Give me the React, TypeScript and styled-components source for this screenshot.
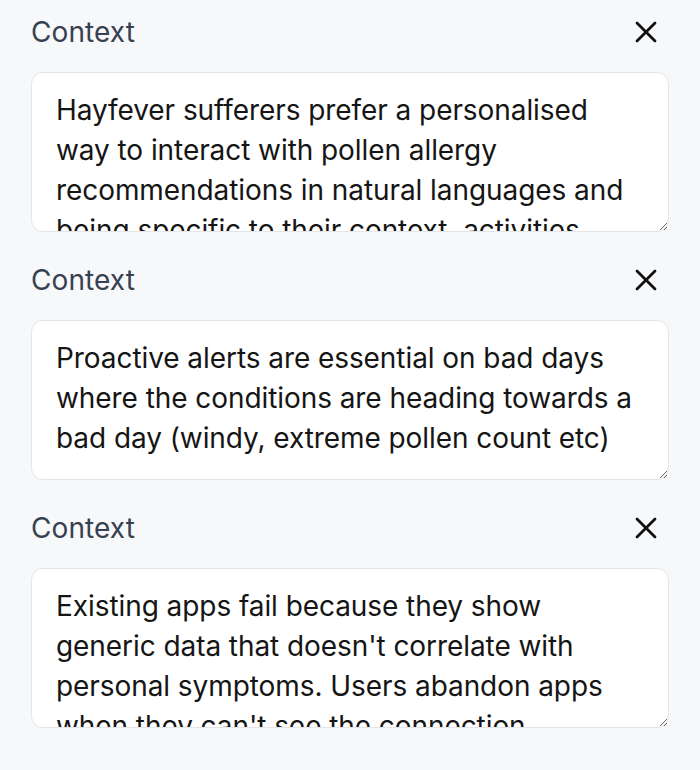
import React from "react";
import styled, { createGlobalStyle } from "styled-components";

const Global = createGlobalStyle`
  html, body {
    margin: 0;
    padding: 0;
    background: #f7f8fa;
    font-family: Inter, "Noto Sans", sans-serif;
  }
`;

const Page = styled.div`
  display: flex;
  flex-direction: column;
  gap: 28px;
  padding: 12px 31px 0 31px;
`;

const Section = styled.section`
  display: flex;
  flex-direction: column;
  gap: 20px;
`;

const Header = styled.div`
  display: flex;
  align-items: center;
  justify-content: space-between;
  height: 40px;
`;

const Label = styled.label`
  font-size: 28px;
  line-height: 40px;
  font-weight: 400;
  color: #374151;
  letter-spacing: 0.1px;
`;

const CloseButton = styled.button`
  display: flex;
  align-items: center;
  justify-content: center;
  width: 40px;
  height: 40px;
  margin-right: 3px;
  padding: 0;
  border: none;
  background: transparent;
  color: #111111;
  cursor: pointer;
`;

const TextArea = styled.textarea`
  box-sizing: border-box;
  width: 100%;
  height: 160px;
  margin: 0;
  padding: 17px 24px;
  border: 1.5px solid #e5e5e5;
  border-radius: 12px;
  background: #ffffff;
  color: #151515;
  font-family: Inter, "Noto Sans", sans-serif;
  font-size: 28px;
  line-height: 40px;
  letter-spacing: -0.07px;
  resize: vertical;
  overflow: hidden;
  outline: none;
`;

const XIcon = () => (
  <svg width="24" height="24" viewBox="0 0 24 24" fill="none">
    <path d="M3 3L21 21M21 3L3 21" stroke="currentColor" strokeWidth="2.8" strokeLinecap="round" />
  </svg>
);

const items = [
  "Hayfever sufferers prefer a personalised way to interact with pollen allergy recommendations in natural languages and being specific to their context, activities, locations and how they feel on the day.",
  "Proactive alerts are essential on bad days where the conditions are heading towards a bad day (windy, extreme pollen count etc)",
  "Existing apps fail because they show generic data that doesn't correlate with personal symptoms. Users abandon apps when they can't see the connection between data and how they feel.",
];

export default function App() {
  return (
    <>
      <Global />
      <Page>
        {items.map((text, i) => (
          <Section key={i}>
            <Header>
              <Label>Context</Label>
              <CloseButton aria-label="Remove">
                <XIcon />
              </CloseButton>
            </Header>
            <TextArea defaultValue={text} />
          </Section>
        ))}
      </Page>
    </>
  );
}
